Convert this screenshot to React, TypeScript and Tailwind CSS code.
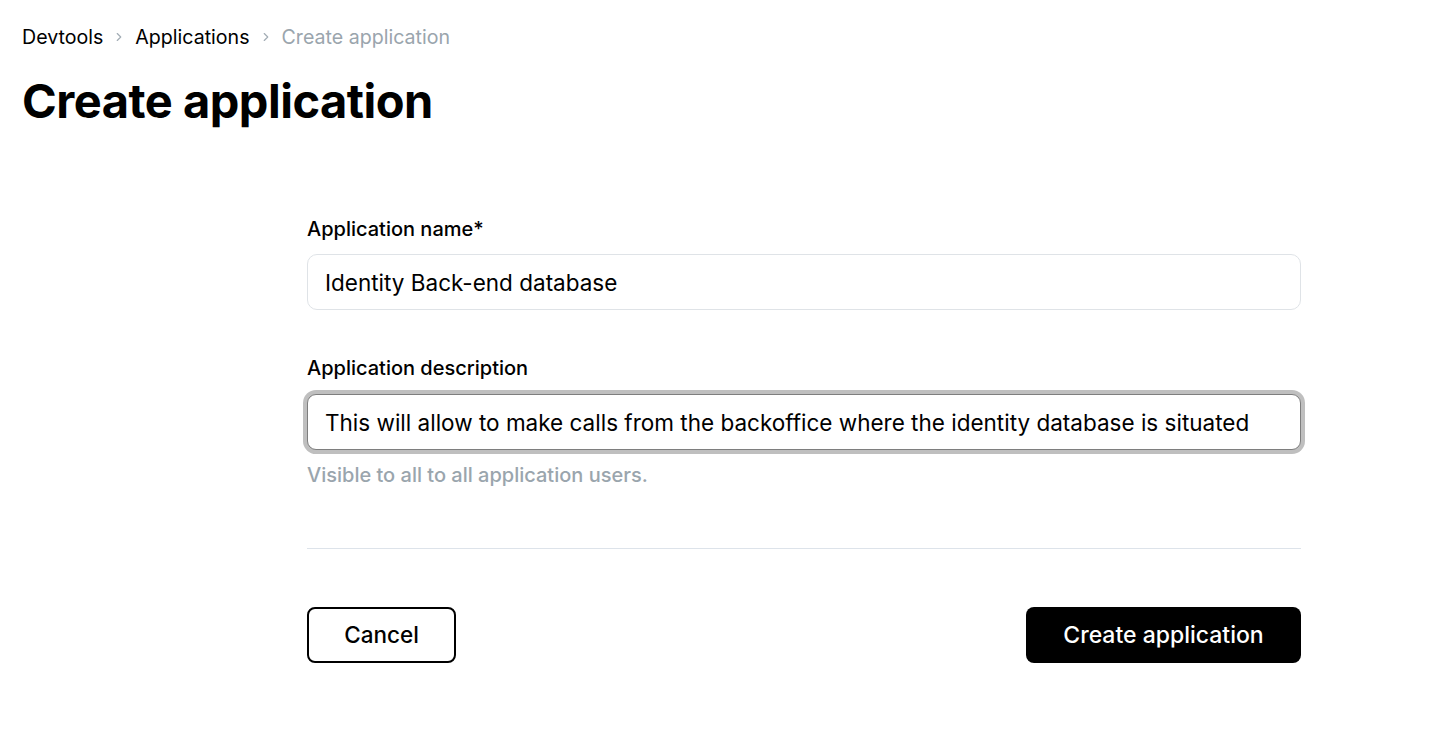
import { ChevronRight } from 'lucide-react';

const font = { fontFamily: 'Inter, "Noto Sans", sans-serif' };

export default function App() {
  return (
    <div className="min-h-screen bg-white text-black" style={font}>
      <div className="px-[22px] pt-[24px]">
        <nav className="flex items-center gap-[9px] text-[19.6px] leading-[26px]">
          <span>Devtools</span>
          <ChevronRight className="h-[14px] w-[14px] text-[#a3adb5]" strokeWidth={2} />
          <span>Applications</span>
          <ChevronRight className="h-[14px] w-[14px] text-[#a3adb5]" strokeWidth={2} />
          <span className="text-[#9aa5ad]">Create application</span>
        </nav>
        <h1 className="mt-[23px] text-[47px] font-bold leading-[56px] tracking-[-0.5px]">
          Create application
        </h1>
      </div>

      <form className="mt-[88px] w-[994px]" style={{ marginLeft: 307 }}>
        <label className="block text-[20px] font-medium leading-[24px]">Application name*</label>
        <input
          className="mt-[13px] h-[56px] w-full rounded-[10px] border border-[#dfe3e7] px-[17px] text-[22.5px] outline-none"
          defaultValue="Identity Back-end database"
        />

        <label className="mt-[46px] block text-[20px] font-medium leading-[24px]">Application description</label>
        <div className="-mx-[4px] mt-[10px] rounded-[13px] bg-[#bfbfbf] p-[4px]">
          <input
            className="h-[56px] w-full rounded-[9px] border-[1.5px] border-[#7e7e7e] bg-white px-[17px] text-[22.5px] outline-none"
            defaultValue="This will allow to make calls from the backoffice where the identity database is situated"
          />
        </div>
        <p className="mt-[8px] text-[20px] font-medium leading-[26px] text-[#9aa5ad]">
          Visible to all to all application users.
        </p>

        <div className="mt-[60px] h-px bg-[#dde3ea]" />

        <div className="mt-[58px] flex items-center justify-between">
          <button type="button" className="h-[56px] w-[149px] rounded-[8px] border-2 border-black text-[22.5px] font-medium">
            Cancel
          </button>
          <button type="button" className="h-[56px] w-[275px] rounded-[8px] bg-black text-[23px] font-medium text-white">
            Create application
          </button>
        </div>
      </form>
    </div>
  );
}
